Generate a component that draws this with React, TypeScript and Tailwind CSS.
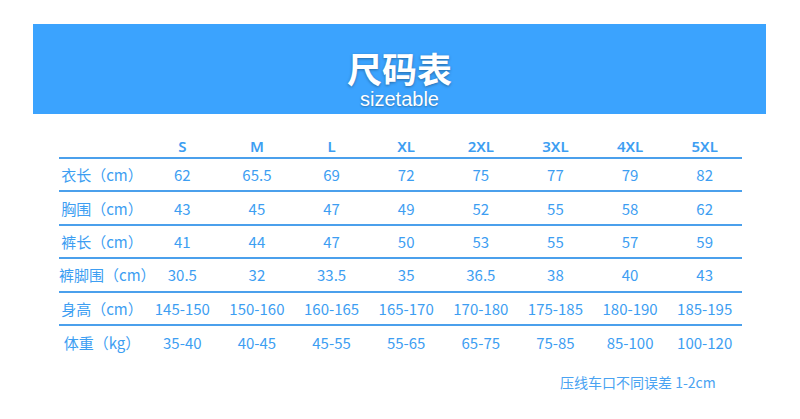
const sizes = ["S", "M", "L", "XL", "2XL", "3XL", "4XL", "5XL"];

const rows = [
  { label: "衣长（cm）", values: ["62", "65.5", "69", "72", "75", "77", "79", "82"] },
  { label: "胸围（cm）", values: ["43", "45", "47", "49", "52", "55", "58", "62"] },
  { label: "裤长（cm）", values: ["41", "44", "47", "50", "53", "55", "57", "59"] },
  { label: "裤脚围（cm）", values: ["30.5", "32", "33.5", "35", "36.5", "38", "40", "43"] },
  { label: "身高（cm）", values: ["145-150", "150-160", "160-165", "165-170", "170-180", "175-185", "180-190", "185-195"] },
  { label: "体重（kg）", values: ["35-40", "40-45", "45-55", "55-65", "65-75", "75-85", "85-100", "100-120"] },
];

const font = { fontFamily: '"Noto Sans CJK SC", "Liberation Sans", sans-serif' };

export default function App() {
  return (
    <div className="w-[800px] h-[419px] bg-white overflow-hidden" style={font}>
      {/* banner */}
      <div className="ml-[33px] mt-[24px] w-[733px] h-[90px] bg-[#3ba3fe] flex flex-col items-center pt-[27px]">
        <div className="text-white text-[35px] font-bold leading-[34px] [text-shadow:0_1px_3px_rgba(0,0,0,0.35)]">
          尺码表
        </div>
        <div
          className="text-white text-[20px] leading-[20px] mt-[4px] [text-shadow:0_1px_2px_rgba(0,0,0,0.3)]"
          style={{ fontFamily: '"Liberation Sans", Arial, sans-serif' }}
        >
          sizetable
        </div>
      </div>

      {/* table */}
      <div className="ml-[59px] mt-[22px] w-[683px] text-[#3d9ef2]">
        <div className="grid grid-cols-[86px_repeat(8,1fr)] h-[23px] border-b-2 border-[#4ba0ec] items-center">
          <div />
          {sizes.map((s) => (
            <div
              key={s}
              className="text-center text-[15px] font-semibold leading-none"
              style={{ fontFamily: '"Noto Sans", "Liberation Sans", sans-serif' }}
            >
              {s}
            </div>
          ))}
        </div>
        {rows.map((r, i) => (
          <div
            key={r.label}
            className={
              "grid grid-cols-[86px_repeat(8,1fr)] h-[33.4px] items-center " +
              (i < rows.length - 1 ? "border-b-2 border-[#4ba0ec]" : "")
            }
          >
            <div className="text-center text-[15px] leading-none whitespace-nowrap">{r.label}</div>
            {r.values.map((v, j) => (
              <div key={j} className="text-center text-[15px] leading-none">
                {v}
              </div>
            ))}
          </div>
        ))}
      </div>

      <div className="ml-[560px] mt-[16px] text-[14px] text-[#4aa3f2] leading-none">压线车口不同误差 1-2cm</div>
    </div>
  );
}
